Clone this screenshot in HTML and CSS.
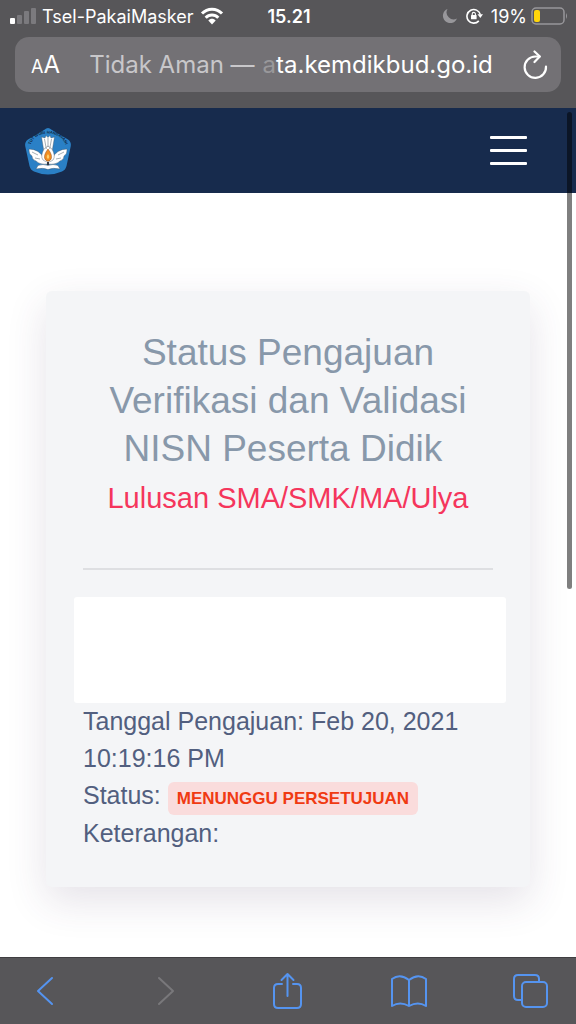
FILE: index.html
```
<!DOCTYPE html>
<html lang="id">
<head>
  <meta charset="UTF-8">
  <meta name="viewport" content="width=device-width, initial-scale=1.0">
  <title>Status Pengajuan NISN</title>
  <link rel="stylesheet" href="styles.css">
</head>
<body>

  <!-- Status bar -->
  <div class="statusbar">
    <div class="status-left">
      <svg width="26" height="18" viewBox="0 0 26 18" aria-hidden="true">
        <rect x="0" y="11" width="5" height="6" rx="1" fill="#fff"/>
        <rect x="7" y="8" width="5" height="9" rx="1" fill="#7b7a7e"/>
        <rect x="14" y="4" width="5" height="13" rx="1" fill="#7b7a7e"/>
        <rect x="21" y="1" width="5" height="16" rx="1" fill="#7b7a7e"/>
      </svg>
      <span>Tsel-PakaiMasker</span>
      <svg width="24" height="18" viewBox="0 0 24 18" fill="none" stroke="#fff" stroke-width="3" aria-hidden="true">
        <path d="M2 6.500C7.500.8 16.500.8 22 6.500"/>
        <path d="M5.700 10.800C9.200 7.200 14.800 7.200 18.300 10.800"/>
        <path d="M8.300 13.500C10.400 11.300 13.600 11.300 15.700 13.500L12 17.500Z" fill="#fff" stroke="none"/>
      </svg>
    </div>
    <span class="time">15.21</span>
    <div class="status-right">
      <svg width="16" height="16" viewBox="0 0 16 16" aria-hidden="true">
        <path d="M5.500 1A7.300 7.300 0 1 0 15 10.500A7 7 0 0 1 5.500 1Z" fill="#98979b"/>
      </svg>
      <svg width="17" height="16" viewBox="0 0 17 16" fill="none" stroke="#fff" aria-hidden="true">
        <path d="M12.800 12.900A6.800 6.800 0 1 1 14.300 6.500" stroke-width="1.600"/>
        <path d="M11.500 6.300H17L14.300 10Z" fill="#fff" stroke="none"/>
        <rect x="5" y="7" width="5.600" height="4.300" rx=".6" fill="#fff" stroke="none"/>
        <path d="M6.200 7.500V6a1.600 1.600 0 0 1 3.200 0V7.500" stroke-width="1.100"/>
      </svg>
      <span>19%</span>
      <svg width="37" height="18" viewBox="0 0 37 18" aria-hidden="true">
        <rect x="1" y="1" width="32" height="16" rx="4" fill="none" stroke="#98979b" stroke-width="1.500"/>
        <rect x="3" y="3" width="6" height="12" rx="2" fill="#ffd60a"/>
        <path d="M35 6Q37 9 35 12Z" fill="#98979b"/>
      </svg>
    </div>
  </div>

  <!-- Address bar -->
  <div class="browser-top">
    <div class="addressbar">
      <button type="button" class="text-size" aria-label="Ukuran teks"><small>A</small>A</button>
      <button type="button" class="url"><span class="insecure">Tidak Aman —</span><span><span class="fade">a</span>ta.kemdikbud.go.id</span></button>
      <button type="button" aria-label="Muat ulang">
        <svg width="26" height="30" viewBox="0 0 26 30" fill="none" stroke="#fff" stroke-width="2.200" stroke-linecap="round" stroke-linejoin="round">
          <path d="M24 16.500A10.700 10.700 0 1 1 13.300 6.500H17.500"/>
          <path d="M12.500 1.500L17.800 6.500L12.500 12"/>
        </svg>
      </button>
    </div>
  </div>

  <header class="navbar">
    <a href="#" aria-label="Kemdikbud">
      <svg width="48" height="48" viewBox="0 0 48 48">
        <path d="M24 1Q25.500 1 28 3L44 12.500Q47.500 15 46.800 19L42.500 39Q41.500 43 38 44.500Q31 47.500 24 47.500T10 44.500Q6.500 43 5.500 39L1.200 19Q.5 15 4 12.500L20 3Q22.500 1 24 1Z" fill="#2a80c6"/>
        <path id="arc" d="M5 24Q7 7.500 24 6.500Q41 7.500 43 24" fill="none"/>
        <text class="motto"><textPath href="#arc" startOffset="50%">TUT WURI HANDAYANI</textPath></text>
        <g fill="#fff" stroke="#3d4f60" stroke-width=".4">
          <path d="M17.500 10L21 11L22 8.500L24 10.500L26 8.500L27 11L30.500 10L28 25H20Z"/>
          <path d="M5 22Q10 22 14 24.500Q18 27 20 32L24 34L28 32Q30 27 34 24.500Q38 22 43 22Q43.500 27 40 29Q40 33 36 34Q32 38 24 37Q16 38 12 34Q8 33 8 29Q4.500 27 5 22Z"/>
          <path d="M20 22Q16 29 19 33Q24 37 29 33Q32 29 28 22L24 19Z"/>
          <path d="M14 38.500Q19 36.500 24 38.500Q29 36.500 34 38.500L36 42Q29 40.500 24 42.500Q19 40.500 12 42Z"/>
        </g>
        <path d="M20.500 12L22.300 22M24 11V20M27.500 12L25.700 22M8 25L14 28M11 31L16 32M40 25L34 28M37 31L32 32" stroke="#6b7983" stroke-width=".6"/>
        <path d="M24 22Q18.500 29 21.500 33Q24 35.500 26.500 33Q29.500 29 24 22Z" fill="#f18d21" stroke="#8d4a18" stroke-width=".5"/>
        <path d="M24 27Q21.500 30 24 32Q26.500 30 24 27Z" fill="#ffd06a"/>
        <path d="M23 35H25V38H23Z" fill="#343b43"/>
      </svg>
    </a>
    <button type="button" class="menu" aria-label="Menu">
      <span></span><span></span><span></span>
    </button>
  </header>

  <main>
    <section class="card">
      <h1>Status Pengajuan Verifikasi dan Validasi NISN Peserta Didik&nbsp;</h1>
      <h2>Lulusan SMA/SMK/MA/Ulya</h2>
      <hr>
      <div class="blank"></div>
      <p>Tanggal Pengajuan: Feb 20, 2021 10:19:16 PM</p>
      <p class="status">Status: <span class="badge">Menunggu Persetujuan</span></p>
      <p>Keterangan:</p>
    </section>
  </main>

  <!-- Toolbar -->
  <nav class="toolbar">
    <button type="button" aria-label="Kembali">
      <svg width="36" height="36" viewBox="0 0 36 36"><path d="M25 5L11 18L25 31"/></svg>
    </button>
    <button type="button" class="off" aria-label="Maju" disabled>
      <svg width="36" height="36" viewBox="0 0 36 36"><path d="M11 5L25 18L11 31"/></svg>
    </button>
    <button type="button" aria-label="Bagikan">
      <svg width="36" height="40" viewBox="0 0 36 40"><path d="M13 13H9Q5 13 5 17V33Q5 37 9 37H28Q32 37 32 33V17Q32 13 28 13H24M18.500 25V3M12.500 9L18.500 3L24.500 9"/></svg>
    </button>
    <button type="button" aria-label="Bookmark">
      <svg width="38" height="36" viewBox="0 0 38 36"><path d="M19 7Q10 0 2 6V33Q10 28 19 33Q28 28 36 33V6Q28 0 19 7V33"/></svg>
    </button>
    <button type="button" aria-label="Tab">
      <svg width="36" height="36" viewBox="0 0 36 36"><path d="M9 27H5Q1 27 1 23V6Q1 2 5 2H22Q26 2 26 6V9"/><rect x="9" y="9" width="25" height="25" rx="4"/></svg>
    </button>
  </nav>

  <div class="scrollbar"></div>

</body>
</html>
```
FILE: styles.css
```
* {
  box-sizing: border-box;
}

body {
  margin: 0;
  min-height: 100vh;
  display: flex;
  flex-direction: column;
  background: #fff;
  font-family: "Liberation Sans", Arial, sans-serif;
}

button {
  padding: 0;
  border: 0;
  background: none;
  color: #fff;
  font: inherit;
}

svg {
  display: block;
}

.statusbar {
  display: grid;
  grid-template-columns: 1fr auto 1fr;
  align-items: center;
  height: 32px;
  padding: 0 8px 0 10px;
  background: #575659;
  color: #fff;
  font-family: Inter, sans-serif;
  font-size: 18px;
}

.status-left,
.status-right {
  display: flex;
  align-items: center;
  gap: 8px;
  white-space: nowrap;
}

.status-left {
  gap: 6px;
}

.status-right {
  justify-content: flex-end;
}

.status-right span {
  margin-right: -4px;
}

.time {
  font-weight: 600;
}

.browser-top {
  padding: 5px 15px 16px;
  background: #575659;
}

.addressbar {
  display: flex;
  align-items: center;
  height: 55px;
  padding: 0 13px 0 16px;
  border-radius: 14px;
  background: #737175;
  color: #fff;
  font-family: Inter, sans-serif;
  font-size: 24px;
}

.text-size small {
  font-size: 18px;
}

.url {
  flex: 1;
  display: flex;
  justify-content: center;
  gap: 8px;
  white-space: nowrap;
}

.insecure {
  color: #c8c7ca;
}

.fade {
  color: #99989b;
}

.navbar {
  display: flex;
  align-items: center;
  justify-content: space-between;
  height: 85px;
  padding: 0 49px 0 24px;
  background: #172b4d;
}

.motto {
  font-size: 4px;
  font-weight: bold;
  text-anchor: middle;
  fill: #10283f;
}

.menu {
  display: flex;
  flex-direction: column;
  gap: 10px;
  width: 37px;
}

.menu span {
  height: 3px;
  border-radius: 1px;
  background: #fff;
}

main {
  flex: 1;
  padding: 98px 46px 66px;
}

.card {
  padding: 38px 37px 35px;
  border-radius: 6px;
  background: #f4f5f7;
  box-shadow: 0 14px 40px rgba(70, 50, 90, 0.14);
  color: #525f7f;
  font-size: 25px;
  line-height: 37px;
}

h1,
h2 {
  margin: 0;
  font-weight: normal;
  text-align: center;
}

h1 {
  color: #8898aa;
  font-size: 37px;
  line-height: 48px;
}

h2 {
  margin-top: 6px;
  color: #f5365c;
  font-size: 29px;
  line-height: 38px;
}

hr {
  margin: 51px 0 27px;
  border: 0;
  border-top: 2px solid #dedfe2;
}

.blank {
  height: 106px;
  margin: 0 -13px 0 -9px;
  border-radius: 3px;
  background: #fff;
}

.card p {
  margin: 0;
}

.badge {
  display: inline-block;
  padding: 0 9px;
  border-radius: 6px;
  background: #fadcdc;
  color: #f03a12;
  font-size: 17px;
  font-weight: bold;
  line-height: 33px;
  text-transform: uppercase;
}

.toolbar {
  display: flex;
  align-items: center;
  justify-content: space-between;
  height: 67px;
  padding: 0 27px;
  border-top: 1px solid #3f3e41;
  background: #575659;
}

.toolbar svg {
  fill: none;
  stroke: #5594f0;
  stroke-width: 2;
  stroke-linecap: round;
  stroke-linejoin: round;
}

.toolbar .off svg {
  stroke: #79787b;
}

/* overlay scroll indicator */
.scrollbar {
  position: absolute;
  top: 112px;
  right: 4px;
  width: 5px;
  height: 477px;
  border-radius: 3px;
  background: rgba(0, 0, 0, 0.5);
}
```
